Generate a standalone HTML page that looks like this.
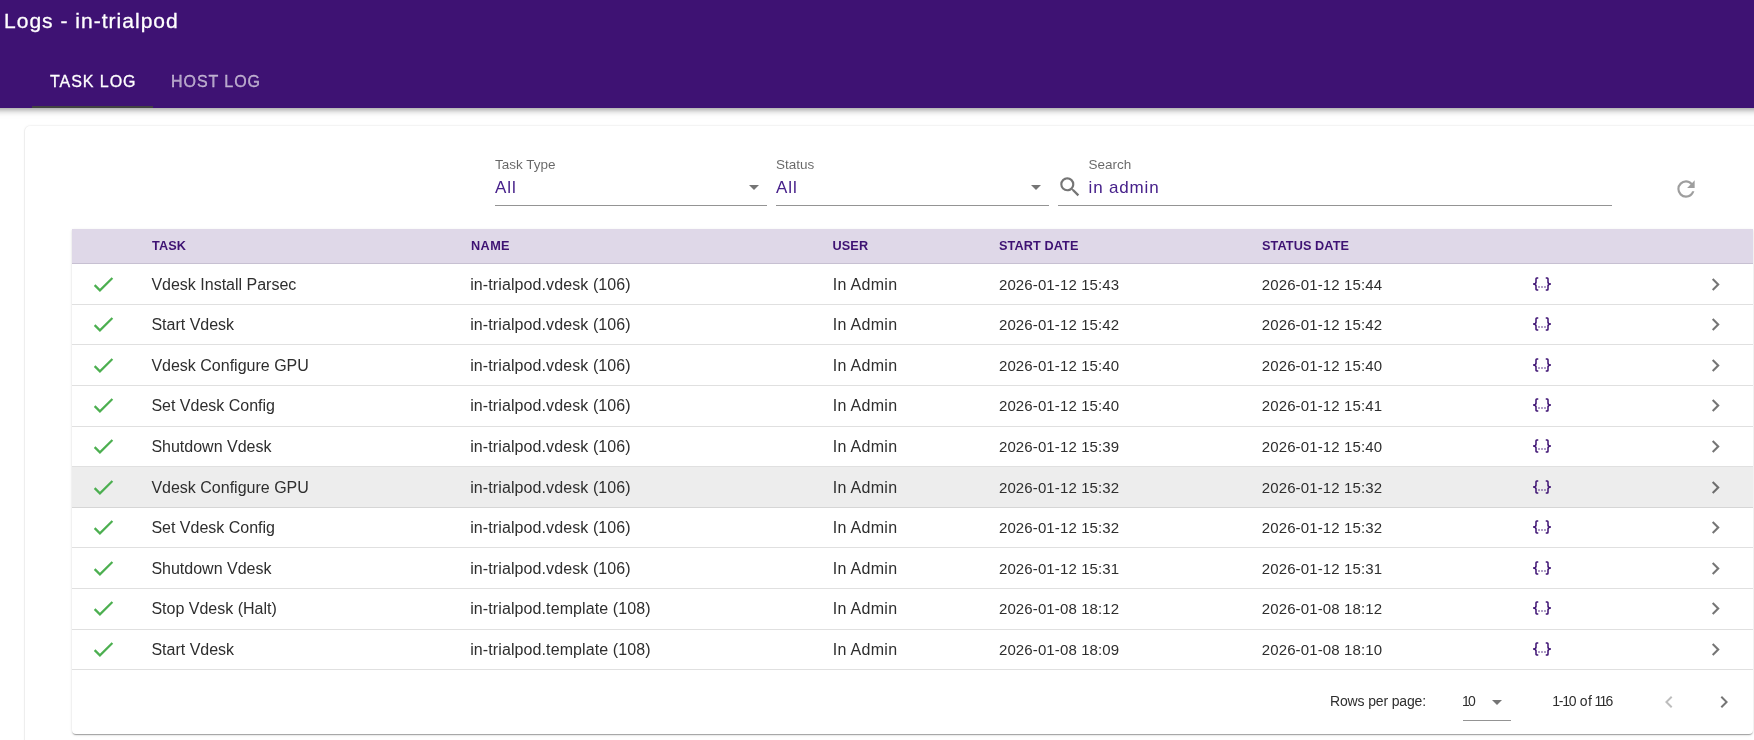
<!DOCTYPE html>
<html><head><meta charset="utf-8"><title>Logs - in-trialpod</title>
<style>
html,body{margin:0;padding:0;background:#fff;width:1754px;height:740px;overflow:hidden;position:relative}
body{font-family:"Liberation Sans",sans-serif}
.t{position:absolute;white-space:nowrap;z-index:5}
.r{position:absolute}
.i{position:absolute;z-index:5}
</style></head><body>
<div id="root" style="position:absolute;left:0;top:0;width:1754px;height:740px;will-change:transform">
<div class="r" style="left:-30px;top:0px;width:1814px;height:108px;background:#3e1273;box-shadow:0 2px 4px -1px rgba(0,0,0,.2),0 4px 5px 0 rgba(0,0,0,.14),0 1px 10px 0 rgba(0,0,0,.12);z-index:2"></div>
<div style="position:absolute;left:0;top:0;width:1754px;height:108px;z-index:3">
<div class="t" style="left:4.00px;top:10.42px;font-size:21px;line-height:21px;color:#ffffff;font-weight:400;letter-spacing:1.02px;-webkit-text-stroke:0.3px #fff;">Logs - in-trialpod</div>
<div class="t" style="left:50.00px;top:74.06px;font-size:16px;line-height:16px;color:#ffffff;font-weight:400;letter-spacing:0.95px;-webkit-text-stroke:0.3px #fff;">TASK LOG</div>
<div class="t" style="left:171.00px;top:74.06px;font-size:16px;line-height:16px;color:rgba(255,255,255,0.6);font-weight:400;letter-spacing:0.95px;-webkit-text-stroke:0.3px rgba(255,255,255,0.6);">HOST LOG</div>
<div class="r" style="left:32px;top:106px;width:121px;height:2px;background:#424242;"></div>
</div>
<div class="r" style="left:25px;top:126px;width:1800px;height:700px;background:#fff;border-radius:5px;box-shadow:-1px 0 0 0 rgba(0,0,0,.045),0 -1px 0 0 rgba(0,0,0,.02),0 0 3px 0 rgba(0,0,0,.08)"></div>
<div class="t" style="left:495.00px;top:157.87px;font-size:13.5px;line-height:13.5px;color:rgba(0,0,0,0.6);font-weight:400;letter-spacing:0px;">Task Type</div>
<div class="t" style="left:495.00px;top:179.11px;font-size:17px;line-height:17px;color:#46208a;font-weight:400;letter-spacing:0.9px;">All</div>
<div class="r" style="left:495px;top:205px;width:272px;height:1px;background:rgba(0,0,0,0.42);"></div>
<svg class="i" style="left:742.00px;top:175.00px;width:24px;height:24px" viewBox="0 0 24 24"><path fill="rgba(0,0,0,0.54)" d="M7,10L12,15L17,10H7Z"/></svg>
<div class="t" style="left:776.00px;top:157.87px;font-size:13.5px;line-height:13.5px;color:rgba(0,0,0,0.6);font-weight:400;letter-spacing:0px;">Status</div>
<div class="t" style="left:776.00px;top:179.11px;font-size:17px;line-height:17px;color:#46208a;font-weight:400;letter-spacing:0.9px;">All</div>
<div class="r" style="left:776px;top:205px;width:273px;height:1px;background:rgba(0,0,0,0.42);"></div>
<svg class="i" style="left:1024.00px;top:175.00px;width:24px;height:24px" viewBox="0 0 24 24"><path fill="rgba(0,0,0,0.54)" d="M7,10L12,15L17,10H7Z"/></svg>
<div class="t" style="left:1088.50px;top:158.07px;font-size:13.5px;line-height:13.5px;color:rgba(0,0,0,0.6);font-weight:400;letter-spacing:0px;">Search</div>
<div class="t" style="left:1088.50px;top:178.81px;font-size:17px;line-height:17px;color:#46208a;font-weight:400;letter-spacing:0.85px;">in admin</div>
<div class="r" style="left:1058px;top:205px;width:554px;height:1px;background:rgba(0,0,0,0.42);"></div>
<svg class="i" style="left:1057.30px;top:173.90px;width:26px;height:26px" viewBox="0 0 24 24"><path fill="rgba(0,0,0,0.54)" d="M9.5,3A6.5,6.5 0 0,1 16,9.5C16,11.11 15.41,12.59 14.44,13.73L14.71,14H15.5L20.5,19L19,20.5L14,15.5V14.71L13.73,14.44C12.59,15.41 11.11,16 9.5,16A6.5,6.5 0 0,1 3,9.5A6.5,6.5 0 0,1 9.5,3M9.5,5C7,5 5,7 5,9.5C5,12 7,14 9.5,14C12,14 14,12 14,9.5C14,7 12,5 9.5,5Z"/></svg>
<svg class="i" style="left:1673.05px;top:176.30px;width:26px;height:26px" viewBox="0 0 24 24"><path fill="rgba(0,0,0,0.38)" d="M17.65,6.35C16.2,4.9 14.21,4 12,4A8,8 0 0,0 4,12A8,8 0 0,0 12,20C15.73,20 18.84,17.45 19.73,14H17.65C16.83,16.33 14.61,18 12,18A6,6 0 0,1 6,12A6,6 0 0,1 12,6C13.66,6 15.14,6.69 16.22,7.78L13,11H20V4L17.65,6.35Z"/></svg>
<div class="r" style="left:72px;top:229px;width:1681px;height:505px;background:#fff;border-radius:0 0 4px 4px;overflow:hidden;box-shadow:0 2px 1px -1px rgba(0,0,0,.2),0 1px 1px 0 rgba(0,0,0,.14),0 1px 3px 0 rgba(0,0,0,.12)">
<div class="r" style="left:0px;top:0px;width:1681px;height:34px;background:#dfd8e8;border-bottom:1px solid #c7c0d2"></div>
</div>
<div class="t" style="left:152.00px;top:240.25px;font-size:12.7px;line-height:12.7px;color:#3e1273;font-weight:700;letter-spacing:0.1px;">TASK</div>
<div class="t" style="left:471.00px;top:240.25px;font-size:12.7px;line-height:12.7px;color:#3e1273;font-weight:700;letter-spacing:0.4px;">NAME</div>
<div class="t" style="left:832.50px;top:240.25px;font-size:12.7px;line-height:12.7px;color:#3e1273;font-weight:700;letter-spacing:0.1px;">USER</div>
<div class="t" style="left:999.00px;top:240.25px;font-size:12.7px;line-height:12.7px;color:#3e1273;font-weight:700;letter-spacing:0.1px;">START DATE</div>
<div class="t" style="left:1262.00px;top:240.25px;font-size:12.7px;line-height:12.7px;color:#3e1273;font-weight:700;letter-spacing:0.1px;">STATUS DATE</div>
<div class="r" style="left:72px;top:304px;width:1681px;height:1px;background:#e0e0e0;"></div>
<svg class="i" style="left:90.00px;top:270.75px;width:26.5px;height:26.5px" viewBox="0 0 24 24"><path fill="#4caf50" d="M21,7L9,19L3.5,13.5L4.91,12.09L9,16.17L19.59,5.59L21,7Z"/></svg>
<div class="t" style="left:151.40px;top:276.96px;font-size:16px;line-height:16px;color:#2e2e2e;font-weight:400;letter-spacing:0.0px;">Vdesk Install Parsec</div>
<div class="t" style="left:470.20px;top:276.96px;font-size:16px;line-height:16px;color:#2e2e2e;font-weight:400;letter-spacing:0.1px;">in-trialpod.vdesk (106)</div>
<div class="t" style="left:832.70px;top:276.96px;font-size:16px;line-height:16px;color:#2e2e2e;font-weight:400;letter-spacing:0.3px;">In Admin</div>
<div class="t" style="left:998.95px;top:277.30px;font-size:15px;line-height:15px;color:#2e2e2e;font-weight:400;letter-spacing:0.12px;">2026-01-12 15:43</div>
<div class="t" style="left:1261.75px;top:277.30px;font-size:15px;line-height:15px;color:#2e2e2e;font-weight:400;letter-spacing:0.12px;">2026-01-12 15:44</div>
<svg class="i" style="left:1532.75px;top:274.70px;width:18px;height:18px" viewBox="0 0 24 24"><path fill="#3e1273" d="M5,3H7V5H5V10A2,2 0 0,1 3,12A2,2 0 0,1 5,14V19H7V21H5C3.93,20.73 3,20.1 3,19V15A2,2 0 0,0 1,13H0V11H1A2,2 0 0,0 3,9V5A2,2 0 0,1 5,3M19,3A2,2 0 0,1 21,5V9A2,2 0 0,0 23,11H24V13H23A2,2 0 0,0 21,15V19A2,2 0 0,1 19,21H17V19H19V14A2,2 0 0,1 21,12A2,2 0 0,1 19,10V5H17V3H19M12,15A1,1 0 0,1 13,16A1,1 0 0,1 12,17A1,1 0 0,1 11,16A1,1 0 0,1 12,15M8,15A1,1 0 0,1 9,16A1,1 0 0,1 8,17A1,1 0 0,1 7,16A1,1 0 0,1 8,15M16,15A1,1 0 0,1 17,16A1,1 0 0,1 16,17A1,1 0 0,1 15,16A1,1 0 0,1 16,15Z"/></svg>
<svg class="i" style="left:1703.00px;top:271.70px;width:25px;height:25px" viewBox="0 0 24 24"><path fill="rgba(0,0,0,0.54)" d="M8.59,16.58L13.17,12L8.59,7.41L10,6L16,12L10,18L8.59,16.58Z"/></svg>
<div class="r" style="left:72px;top:344px;width:1681px;height:1px;background:#e0e0e0;"></div>
<svg class="i" style="left:90.00px;top:310.75px;width:26.5px;height:26.5px" viewBox="0 0 24 24"><path fill="#4caf50" d="M21,7L9,19L3.5,13.5L4.91,12.09L9,16.17L19.59,5.59L21,7Z"/></svg>
<div class="t" style="left:151.40px;top:316.96px;font-size:16px;line-height:16px;color:#2e2e2e;font-weight:400;letter-spacing:0.0px;">Start Vdesk</div>
<div class="t" style="left:470.20px;top:316.96px;font-size:16px;line-height:16px;color:#2e2e2e;font-weight:400;letter-spacing:0.1px;">in-trialpod.vdesk (106)</div>
<div class="t" style="left:832.70px;top:316.96px;font-size:16px;line-height:16px;color:#2e2e2e;font-weight:400;letter-spacing:0.3px;">In Admin</div>
<div class="t" style="left:998.95px;top:317.30px;font-size:15px;line-height:15px;color:#2e2e2e;font-weight:400;letter-spacing:0.12px;">2026-01-12 15:42</div>
<div class="t" style="left:1261.75px;top:317.30px;font-size:15px;line-height:15px;color:#2e2e2e;font-weight:400;letter-spacing:0.12px;">2026-01-12 15:42</div>
<svg class="i" style="left:1532.75px;top:314.70px;width:18px;height:18px" viewBox="0 0 24 24"><path fill="#3e1273" d="M5,3H7V5H5V10A2,2 0 0,1 3,12A2,2 0 0,1 5,14V19H7V21H5C3.93,20.73 3,20.1 3,19V15A2,2 0 0,0 1,13H0V11H1A2,2 0 0,0 3,9V5A2,2 0 0,1 5,3M19,3A2,2 0 0,1 21,5V9A2,2 0 0,0 23,11H24V13H23A2,2 0 0,0 21,15V19A2,2 0 0,1 19,21H17V19H19V14A2,2 0 0,1 21,12A2,2 0 0,1 19,10V5H17V3H19M12,15A1,1 0 0,1 13,16A1,1 0 0,1 12,17A1,1 0 0,1 11,16A1,1 0 0,1 12,15M8,15A1,1 0 0,1 9,16A1,1 0 0,1 8,17A1,1 0 0,1 7,16A1,1 0 0,1 8,15M16,15A1,1 0 0,1 17,16A1,1 0 0,1 16,17A1,1 0 0,1 15,16A1,1 0 0,1 16,15Z"/></svg>
<svg class="i" style="left:1703.00px;top:311.70px;width:25px;height:25px" viewBox="0 0 24 24"><path fill="rgba(0,0,0,0.54)" d="M8.59,16.58L13.17,12L8.59,7.41L10,6L16,12L10,18L8.59,16.58Z"/></svg>
<div class="r" style="left:72px;top:385px;width:1681px;height:1px;background:#e0e0e0;"></div>
<svg class="i" style="left:90.00px;top:351.75px;width:26.5px;height:26.5px" viewBox="0 0 24 24"><path fill="#4caf50" d="M21,7L9,19L3.5,13.5L4.91,12.09L9,16.17L19.59,5.59L21,7Z"/></svg>
<div class="t" style="left:151.40px;top:357.96px;font-size:16px;line-height:16px;color:#2e2e2e;font-weight:400;letter-spacing:0.0px;">Vdesk Configure GPU</div>
<div class="t" style="left:470.20px;top:357.96px;font-size:16px;line-height:16px;color:#2e2e2e;font-weight:400;letter-spacing:0.1px;">in-trialpod.vdesk (106)</div>
<div class="t" style="left:832.70px;top:357.96px;font-size:16px;line-height:16px;color:#2e2e2e;font-weight:400;letter-spacing:0.3px;">In Admin</div>
<div class="t" style="left:998.95px;top:358.30px;font-size:15px;line-height:15px;color:#2e2e2e;font-weight:400;letter-spacing:0.12px;">2026-01-12 15:40</div>
<div class="t" style="left:1261.75px;top:358.30px;font-size:15px;line-height:15px;color:#2e2e2e;font-weight:400;letter-spacing:0.12px;">2026-01-12 15:40</div>
<svg class="i" style="left:1532.75px;top:355.70px;width:18px;height:18px" viewBox="0 0 24 24"><path fill="#3e1273" d="M5,3H7V5H5V10A2,2 0 0,1 3,12A2,2 0 0,1 5,14V19H7V21H5C3.93,20.73 3,20.1 3,19V15A2,2 0 0,0 1,13H0V11H1A2,2 0 0,0 3,9V5A2,2 0 0,1 5,3M19,3A2,2 0 0,1 21,5V9A2,2 0 0,0 23,11H24V13H23A2,2 0 0,0 21,15V19A2,2 0 0,1 19,21H17V19H19V14A2,2 0 0,1 21,12A2,2 0 0,1 19,10V5H17V3H19M12,15A1,1 0 0,1 13,16A1,1 0 0,1 12,17A1,1 0 0,1 11,16A1,1 0 0,1 12,15M8,15A1,1 0 0,1 9,16A1,1 0 0,1 8,17A1,1 0 0,1 7,16A1,1 0 0,1 8,15M16,15A1,1 0 0,1 17,16A1,1 0 0,1 16,17A1,1 0 0,1 15,16A1,1 0 0,1 16,15Z"/></svg>
<svg class="i" style="left:1703.00px;top:352.70px;width:25px;height:25px" viewBox="0 0 24 24"><path fill="rgba(0,0,0,0.54)" d="M8.59,16.58L13.17,12L8.59,7.41L10,6L16,12L10,18L8.59,16.58Z"/></svg>
<div class="r" style="left:72px;top:426px;width:1681px;height:1px;background:#e0e0e0;"></div>
<svg class="i" style="left:90.00px;top:391.75px;width:26.5px;height:26.5px" viewBox="0 0 24 24"><path fill="#4caf50" d="M21,7L9,19L3.5,13.5L4.91,12.09L9,16.17L19.59,5.59L21,7Z"/></svg>
<div class="t" style="left:151.40px;top:397.96px;font-size:16px;line-height:16px;color:#2e2e2e;font-weight:400;letter-spacing:0.0px;">Set Vdesk Config</div>
<div class="t" style="left:470.20px;top:397.96px;font-size:16px;line-height:16px;color:#2e2e2e;font-weight:400;letter-spacing:0.1px;">in-trialpod.vdesk (106)</div>
<div class="t" style="left:832.70px;top:397.96px;font-size:16px;line-height:16px;color:#2e2e2e;font-weight:400;letter-spacing:0.3px;">In Admin</div>
<div class="t" style="left:998.95px;top:398.30px;font-size:15px;line-height:15px;color:#2e2e2e;font-weight:400;letter-spacing:0.12px;">2026-01-12 15:40</div>
<div class="t" style="left:1261.75px;top:398.30px;font-size:15px;line-height:15px;color:#2e2e2e;font-weight:400;letter-spacing:0.12px;">2026-01-12 15:41</div>
<svg class="i" style="left:1532.75px;top:395.70px;width:18px;height:18px" viewBox="0 0 24 24"><path fill="#3e1273" d="M5,3H7V5H5V10A2,2 0 0,1 3,12A2,2 0 0,1 5,14V19H7V21H5C3.93,20.73 3,20.1 3,19V15A2,2 0 0,0 1,13H0V11H1A2,2 0 0,0 3,9V5A2,2 0 0,1 5,3M19,3A2,2 0 0,1 21,5V9A2,2 0 0,0 23,11H24V13H23A2,2 0 0,0 21,15V19A2,2 0 0,1 19,21H17V19H19V14A2,2 0 0,1 21,12A2,2 0 0,1 19,10V5H17V3H19M12,15A1,1 0 0,1 13,16A1,1 0 0,1 12,17A1,1 0 0,1 11,16A1,1 0 0,1 12,15M8,15A1,1 0 0,1 9,16A1,1 0 0,1 8,17A1,1 0 0,1 7,16A1,1 0 0,1 8,15M16,15A1,1 0 0,1 17,16A1,1 0 0,1 16,17A1,1 0 0,1 15,16A1,1 0 0,1 16,15Z"/></svg>
<svg class="i" style="left:1703.00px;top:392.70px;width:25px;height:25px" viewBox="0 0 24 24"><path fill="rgba(0,0,0,0.54)" d="M8.59,16.58L13.17,12L8.59,7.41L10,6L16,12L10,18L8.59,16.58Z"/></svg>
<div class="r" style="left:72px;top:466px;width:1681px;height:1px;background:#e0e0e0;"></div>
<svg class="i" style="left:90.00px;top:432.75px;width:26.5px;height:26.5px" viewBox="0 0 24 24"><path fill="#4caf50" d="M21,7L9,19L3.5,13.5L4.91,12.09L9,16.17L19.59,5.59L21,7Z"/></svg>
<div class="t" style="left:151.40px;top:438.96px;font-size:16px;line-height:16px;color:#2e2e2e;font-weight:400;letter-spacing:0.0px;">Shutdown Vdesk</div>
<div class="t" style="left:470.20px;top:438.96px;font-size:16px;line-height:16px;color:#2e2e2e;font-weight:400;letter-spacing:0.1px;">in-trialpod.vdesk (106)</div>
<div class="t" style="left:832.70px;top:438.96px;font-size:16px;line-height:16px;color:#2e2e2e;font-weight:400;letter-spacing:0.3px;">In Admin</div>
<div class="t" style="left:998.95px;top:439.30px;font-size:15px;line-height:15px;color:#2e2e2e;font-weight:400;letter-spacing:0.12px;">2026-01-12 15:39</div>
<div class="t" style="left:1261.75px;top:439.30px;font-size:15px;line-height:15px;color:#2e2e2e;font-weight:400;letter-spacing:0.12px;">2026-01-12 15:40</div>
<svg class="i" style="left:1532.75px;top:436.70px;width:18px;height:18px" viewBox="0 0 24 24"><path fill="#3e1273" d="M5,3H7V5H5V10A2,2 0 0,1 3,12A2,2 0 0,1 5,14V19H7V21H5C3.93,20.73 3,20.1 3,19V15A2,2 0 0,0 1,13H0V11H1A2,2 0 0,0 3,9V5A2,2 0 0,1 5,3M19,3A2,2 0 0,1 21,5V9A2,2 0 0,0 23,11H24V13H23A2,2 0 0,0 21,15V19A2,2 0 0,1 19,21H17V19H19V14A2,2 0 0,1 21,12A2,2 0 0,1 19,10V5H17V3H19M12,15A1,1 0 0,1 13,16A1,1 0 0,1 12,17A1,1 0 0,1 11,16A1,1 0 0,1 12,15M8,15A1,1 0 0,1 9,16A1,1 0 0,1 8,17A1,1 0 0,1 7,16A1,1 0 0,1 8,15M16,15A1,1 0 0,1 17,16A1,1 0 0,1 16,17A1,1 0 0,1 15,16A1,1 0 0,1 16,15Z"/></svg>
<svg class="i" style="left:1703.00px;top:433.70px;width:25px;height:25px" viewBox="0 0 24 24"><path fill="rgba(0,0,0,0.54)" d="M8.59,16.58L13.17,12L8.59,7.41L10,6L16,12L10,18L8.59,16.58Z"/></svg>
<div class="r" style="left:72px;top:467px;width:1681px;height:40px;background:#ededed;"></div>
<div class="r" style="left:72px;top:507px;width:1681px;height:1px;background:#d6d6d6;"></div>
<svg class="i" style="left:90.00px;top:473.75px;width:26.5px;height:26.5px" viewBox="0 0 24 24"><path fill="#4caf50" d="M21,7L9,19L3.5,13.5L4.91,12.09L9,16.17L19.59,5.59L21,7Z"/></svg>
<div class="t" style="left:151.40px;top:479.96px;font-size:16px;line-height:16px;color:#2e2e2e;font-weight:400;letter-spacing:0.0px;">Vdesk Configure GPU</div>
<div class="t" style="left:470.20px;top:479.96px;font-size:16px;line-height:16px;color:#2e2e2e;font-weight:400;letter-spacing:0.1px;">in-trialpod.vdesk (106)</div>
<div class="t" style="left:832.70px;top:479.96px;font-size:16px;line-height:16px;color:#2e2e2e;font-weight:400;letter-spacing:0.3px;">In Admin</div>
<div class="t" style="left:998.95px;top:480.30px;font-size:15px;line-height:15px;color:#2e2e2e;font-weight:400;letter-spacing:0.12px;">2026-01-12 15:32</div>
<div class="t" style="left:1261.75px;top:480.30px;font-size:15px;line-height:15px;color:#2e2e2e;font-weight:400;letter-spacing:0.12px;">2026-01-12 15:32</div>
<svg class="i" style="left:1532.75px;top:477.70px;width:18px;height:18px" viewBox="0 0 24 24"><path fill="#3e1273" d="M5,3H7V5H5V10A2,2 0 0,1 3,12A2,2 0 0,1 5,14V19H7V21H5C3.93,20.73 3,20.1 3,19V15A2,2 0 0,0 1,13H0V11H1A2,2 0 0,0 3,9V5A2,2 0 0,1 5,3M19,3A2,2 0 0,1 21,5V9A2,2 0 0,0 23,11H24V13H23A2,2 0 0,0 21,15V19A2,2 0 0,1 19,21H17V19H19V14A2,2 0 0,1 21,12A2,2 0 0,1 19,10V5H17V3H19M12,15A1,1 0 0,1 13,16A1,1 0 0,1 12,17A1,1 0 0,1 11,16A1,1 0 0,1 12,15M8,15A1,1 0 0,1 9,16A1,1 0 0,1 8,17A1,1 0 0,1 7,16A1,1 0 0,1 8,15M16,15A1,1 0 0,1 17,16A1,1 0 0,1 16,17A1,1 0 0,1 15,16A1,1 0 0,1 16,15Z"/></svg>
<svg class="i" style="left:1703.00px;top:474.70px;width:25px;height:25px" viewBox="0 0 24 24"><path fill="rgba(0,0,0,0.54)" d="M8.59,16.58L13.17,12L8.59,7.41L10,6L16,12L10,18L8.59,16.58Z"/></svg>
<div class="r" style="left:72px;top:547px;width:1681px;height:1px;background:#e0e0e0;"></div>
<svg class="i" style="left:90.00px;top:513.75px;width:26.5px;height:26.5px" viewBox="0 0 24 24"><path fill="#4caf50" d="M21,7L9,19L3.5,13.5L4.91,12.09L9,16.17L19.59,5.59L21,7Z"/></svg>
<div class="t" style="left:151.40px;top:519.96px;font-size:16px;line-height:16px;color:#2e2e2e;font-weight:400;letter-spacing:0.0px;">Set Vdesk Config</div>
<div class="t" style="left:470.20px;top:519.96px;font-size:16px;line-height:16px;color:#2e2e2e;font-weight:400;letter-spacing:0.1px;">in-trialpod.vdesk (106)</div>
<div class="t" style="left:832.70px;top:519.96px;font-size:16px;line-height:16px;color:#2e2e2e;font-weight:400;letter-spacing:0.3px;">In Admin</div>
<div class="t" style="left:998.95px;top:520.30px;font-size:15px;line-height:15px;color:#2e2e2e;font-weight:400;letter-spacing:0.12px;">2026-01-12 15:32</div>
<div class="t" style="left:1261.75px;top:520.30px;font-size:15px;line-height:15px;color:#2e2e2e;font-weight:400;letter-spacing:0.12px;">2026-01-12 15:32</div>
<svg class="i" style="left:1532.75px;top:517.70px;width:18px;height:18px" viewBox="0 0 24 24"><path fill="#3e1273" d="M5,3H7V5H5V10A2,2 0 0,1 3,12A2,2 0 0,1 5,14V19H7V21H5C3.93,20.73 3,20.1 3,19V15A2,2 0 0,0 1,13H0V11H1A2,2 0 0,0 3,9V5A2,2 0 0,1 5,3M19,3A2,2 0 0,1 21,5V9A2,2 0 0,0 23,11H24V13H23A2,2 0 0,0 21,15V19A2,2 0 0,1 19,21H17V19H19V14A2,2 0 0,1 21,12A2,2 0 0,1 19,10V5H17V3H19M12,15A1,1 0 0,1 13,16A1,1 0 0,1 12,17A1,1 0 0,1 11,16A1,1 0 0,1 12,15M8,15A1,1 0 0,1 9,16A1,1 0 0,1 8,17A1,1 0 0,1 7,16A1,1 0 0,1 8,15M16,15A1,1 0 0,1 17,16A1,1 0 0,1 16,17A1,1 0 0,1 15,16A1,1 0 0,1 16,15Z"/></svg>
<svg class="i" style="left:1703.00px;top:514.70px;width:25px;height:25px" viewBox="0 0 24 24"><path fill="rgba(0,0,0,0.54)" d="M8.59,16.58L13.17,12L8.59,7.41L10,6L16,12L10,18L8.59,16.58Z"/></svg>
<div class="r" style="left:72px;top:588px;width:1681px;height:1px;background:#e0e0e0;"></div>
<svg class="i" style="left:90.00px;top:554.75px;width:26.5px;height:26.5px" viewBox="0 0 24 24"><path fill="#4caf50" d="M21,7L9,19L3.5,13.5L4.91,12.09L9,16.17L19.59,5.59L21,7Z"/></svg>
<div class="t" style="left:151.40px;top:560.96px;font-size:16px;line-height:16px;color:#2e2e2e;font-weight:400;letter-spacing:0.0px;">Shutdown Vdesk</div>
<div class="t" style="left:470.20px;top:560.96px;font-size:16px;line-height:16px;color:#2e2e2e;font-weight:400;letter-spacing:0.1px;">in-trialpod.vdesk (106)</div>
<div class="t" style="left:832.70px;top:560.96px;font-size:16px;line-height:16px;color:#2e2e2e;font-weight:400;letter-spacing:0.3px;">In Admin</div>
<div class="t" style="left:998.95px;top:561.30px;font-size:15px;line-height:15px;color:#2e2e2e;font-weight:400;letter-spacing:0.12px;">2026-01-12 15:31</div>
<div class="t" style="left:1261.75px;top:561.30px;font-size:15px;line-height:15px;color:#2e2e2e;font-weight:400;letter-spacing:0.12px;">2026-01-12 15:31</div>
<svg class="i" style="left:1532.75px;top:558.70px;width:18px;height:18px" viewBox="0 0 24 24"><path fill="#3e1273" d="M5,3H7V5H5V10A2,2 0 0,1 3,12A2,2 0 0,1 5,14V19H7V21H5C3.93,20.73 3,20.1 3,19V15A2,2 0 0,0 1,13H0V11H1A2,2 0 0,0 3,9V5A2,2 0 0,1 5,3M19,3A2,2 0 0,1 21,5V9A2,2 0 0,0 23,11H24V13H23A2,2 0 0,0 21,15V19A2,2 0 0,1 19,21H17V19H19V14A2,2 0 0,1 21,12A2,2 0 0,1 19,10V5H17V3H19M12,15A1,1 0 0,1 13,16A1,1 0 0,1 12,17A1,1 0 0,1 11,16A1,1 0 0,1 12,15M8,15A1,1 0 0,1 9,16A1,1 0 0,1 8,17A1,1 0 0,1 7,16A1,1 0 0,1 8,15M16,15A1,1 0 0,1 17,16A1,1 0 0,1 16,17A1,1 0 0,1 15,16A1,1 0 0,1 16,15Z"/></svg>
<svg class="i" style="left:1703.00px;top:555.70px;width:25px;height:25px" viewBox="0 0 24 24"><path fill="rgba(0,0,0,0.54)" d="M8.59,16.58L13.17,12L8.59,7.41L10,6L16,12L10,18L8.59,16.58Z"/></svg>
<div class="r" style="left:72px;top:629px;width:1681px;height:1px;background:#e0e0e0;"></div>
<svg class="i" style="left:90.00px;top:594.75px;width:26.5px;height:26.5px" viewBox="0 0 24 24"><path fill="#4caf50" d="M21,7L9,19L3.5,13.5L4.91,12.09L9,16.17L19.59,5.59L21,7Z"/></svg>
<div class="t" style="left:151.40px;top:600.96px;font-size:16px;line-height:16px;color:#2e2e2e;font-weight:400;letter-spacing:0.0px;">Stop Vdesk (Halt)</div>
<div class="t" style="left:470.20px;top:600.96px;font-size:16px;line-height:16px;color:#2e2e2e;font-weight:400;letter-spacing:0.1px;">in-trialpod.template (108)</div>
<div class="t" style="left:832.70px;top:600.96px;font-size:16px;line-height:16px;color:#2e2e2e;font-weight:400;letter-spacing:0.3px;">In Admin</div>
<div class="t" style="left:998.95px;top:601.30px;font-size:15px;line-height:15px;color:#2e2e2e;font-weight:400;letter-spacing:0.12px;">2026-01-08 18:12</div>
<div class="t" style="left:1261.75px;top:601.30px;font-size:15px;line-height:15px;color:#2e2e2e;font-weight:400;letter-spacing:0.12px;">2026-01-08 18:12</div>
<svg class="i" style="left:1532.75px;top:598.70px;width:18px;height:18px" viewBox="0 0 24 24"><path fill="#3e1273" d="M5,3H7V5H5V10A2,2 0 0,1 3,12A2,2 0 0,1 5,14V19H7V21H5C3.93,20.73 3,20.1 3,19V15A2,2 0 0,0 1,13H0V11H1A2,2 0 0,0 3,9V5A2,2 0 0,1 5,3M19,3A2,2 0 0,1 21,5V9A2,2 0 0,0 23,11H24V13H23A2,2 0 0,0 21,15V19A2,2 0 0,1 19,21H17V19H19V14A2,2 0 0,1 21,12A2,2 0 0,1 19,10V5H17V3H19M12,15A1,1 0 0,1 13,16A1,1 0 0,1 12,17A1,1 0 0,1 11,16A1,1 0 0,1 12,15M8,15A1,1 0 0,1 9,16A1,1 0 0,1 8,17A1,1 0 0,1 7,16A1,1 0 0,1 8,15M16,15A1,1 0 0,1 17,16A1,1 0 0,1 16,17A1,1 0 0,1 15,16A1,1 0 0,1 16,15Z"/></svg>
<svg class="i" style="left:1703.00px;top:595.70px;width:25px;height:25px" viewBox="0 0 24 24"><path fill="rgba(0,0,0,0.54)" d="M8.59,16.58L13.17,12L8.59,7.41L10,6L16,12L10,18L8.59,16.58Z"/></svg>
<div class="r" style="left:72px;top:669px;width:1681px;height:1px;background:#e0e0e0;"></div>
<svg class="i" style="left:90.00px;top:635.75px;width:26.5px;height:26.5px" viewBox="0 0 24 24"><path fill="#4caf50" d="M21,7L9,19L3.5,13.5L4.91,12.09L9,16.17L19.59,5.59L21,7Z"/></svg>
<div class="t" style="left:151.40px;top:641.96px;font-size:16px;line-height:16px;color:#2e2e2e;font-weight:400;letter-spacing:0.0px;">Start Vdesk</div>
<div class="t" style="left:470.20px;top:641.96px;font-size:16px;line-height:16px;color:#2e2e2e;font-weight:400;letter-spacing:0.1px;">in-trialpod.template (108)</div>
<div class="t" style="left:832.70px;top:641.96px;font-size:16px;line-height:16px;color:#2e2e2e;font-weight:400;letter-spacing:0.3px;">In Admin</div>
<div class="t" style="left:998.95px;top:642.30px;font-size:15px;line-height:15px;color:#2e2e2e;font-weight:400;letter-spacing:0.12px;">2026-01-08 18:09</div>
<div class="t" style="left:1261.75px;top:642.30px;font-size:15px;line-height:15px;color:#2e2e2e;font-weight:400;letter-spacing:0.12px;">2026-01-08 18:10</div>
<svg class="i" style="left:1532.75px;top:639.70px;width:18px;height:18px" viewBox="0 0 24 24"><path fill="#3e1273" d="M5,3H7V5H5V10A2,2 0 0,1 3,12A2,2 0 0,1 5,14V19H7V21H5C3.93,20.73 3,20.1 3,19V15A2,2 0 0,0 1,13H0V11H1A2,2 0 0,0 3,9V5A2,2 0 0,1 5,3M19,3A2,2 0 0,1 21,5V9A2,2 0 0,0 23,11H24V13H23A2,2 0 0,0 21,15V19A2,2 0 0,1 19,21H17V19H19V14A2,2 0 0,1 21,12A2,2 0 0,1 19,10V5H17V3H19M12,15A1,1 0 0,1 13,16A1,1 0 0,1 12,17A1,1 0 0,1 11,16A1,1 0 0,1 12,15M8,15A1,1 0 0,1 9,16A1,1 0 0,1 8,17A1,1 0 0,1 7,16A1,1 0 0,1 8,15M16,15A1,1 0 0,1 17,16A1,1 0 0,1 16,17A1,1 0 0,1 15,16A1,1 0 0,1 16,15Z"/></svg>
<svg class="i" style="left:1703.00px;top:636.70px;width:25px;height:25px" viewBox="0 0 24 24"><path fill="rgba(0,0,0,0.54)" d="M8.59,16.58L13.17,12L8.59,7.41L10,6L16,12L10,18L8.59,16.58Z"/></svg>
<div class="t" style="left:1330.00px;top:694.15px;font-size:14px;line-height:14px;color:#2e2e2e;font-weight:400;letter-spacing:-0.15px;">Rows per page:</div>
<div class="t" style="left:1462.10px;top:694.15px;font-size:14px;line-height:14px;color:#2e2e2e;font-weight:400;letter-spacing:-2px;">10</div>
<svg class="i" style="left:1485.00px;top:690.00px;width:24px;height:24px" viewBox="0 0 24 24"><path fill="rgba(0,0,0,0.54)" d="M7,10L12,15L17,10H7Z"/></svg>
<div class="r" style="left:1463px;top:720px;width:48px;height:1px;background:rgba(0,0,0,0.42);"></div>
<div class="t" style="left:1552.20px;top:694.15px;font-size:14px;line-height:14px;color:#2e2e2e;font-weight:400;letter-spacing:-1.25px;">1-10</div>
<div class="t" style="left:1579.70px;top:694.15px;font-size:14px;line-height:14px;color:#2e2e2e;font-weight:400;letter-spacing:0.55px;">of</div>
<div class="t" style="left:1594.50px;top:694.15px;font-size:14px;line-height:14px;color:#2e2e2e;font-weight:400;letter-spacing:-1.75px;">116</div>
<svg class="i" style="left:1656.50px;top:689.90px;width:24px;height:24px" viewBox="0 0 24 24"><path fill="rgba(0,0,0,0.26)" d="M15.41,16.58L10.83,12L15.41,7.41L14,6L8,12L14,18L15.41,16.58Z"/></svg>
<svg class="i" style="left:1711.50px;top:689.90px;width:24px;height:24px" viewBox="0 0 24 24"><path fill="rgba(0,0,0,0.54)" d="M8.59,16.58L13.17,12L8.59,7.41L10,6L16,12L10,18L8.59,16.58Z"/></svg>
</div>
</body></html>
